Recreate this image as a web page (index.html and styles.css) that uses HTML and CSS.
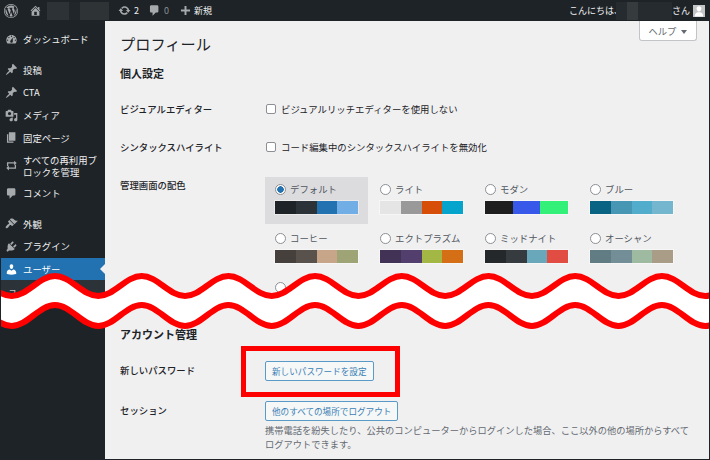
FILE: index.html
```html
<!DOCTYPE html>
<html lang="ja">
<head>
    <meta charset="UTF-8">
    <meta name="viewport" content="width=device-width, initial-scale=1.0">
    <title>プロフィール</title>
    <link rel="stylesheet" href="styles.css">
</head>
<body>
    <div class="frame">
        <header class="adminbar">
            <svg class="bar-logo" viewBox="0 0 20 20"><path d="M20 10c0-5.52-4.48-10-10-10S0 4.48 0 10s4.48 10 10 10 10-4.48 10-10zM10 1.01c4.96 0 8.99 4.03 8.99 8.99s-4.03 8.99-8.99 8.99S1.01 14.96 1.01 10 5.04 1.01 10 1.01zM8.01 14.82L4.96 6.61c.49-.03 1.05-.08 1.05-.08.43-.05.38-1.01-.06-.99 0 0-1.29.1-2.13.1-.15 0-.33 0-.52-.01 1.44-2.17 3.9-3.6 6.7-3.6 2.09 0 3.99.79 5.41 2.09-.6-.08-1.45.35-1.45 1.42 0 .66.38 1.22.79 1.88.31.54.5 1.22.5 2.21 0 1.34-1.27 4.48-1.27 4.48l-2.71-7.5c.48-.03.75-.16.75-.16.43-.05.38-1.1-.05-1.08 0 0-1.3.11-2.14.11-.78 0-2.11-.11-2.11-.11-.43-.02-.48 1.06-.05 1.08l.84.08 1.12 3.04zm6.02 2.15L16.64 10s.67-1.69.39-3.81c.63 1.14.94 2.42.94 3.81 0 2.96-1.56 5.58-3.94 6.97zM2.68 6.77L6.5 17.25c-2.67-1.3-4.47-4.08-4.47-7.25 0-1.16.2-2.23.65-3.23zm7.45 4.53l2.29 6.25c-.75.27-1.57.42-2.42.42-.72 0-1.41-.11-2.06-.3z"/></svg>
            <svg class="bar-icon home" viewBox="0 0 20 20"><path d="M16 8.5l1.53 1.53-1.06 1.06L10 4.62l-6.47 6.47-1.06-1.06L10 2.5l4 4v-2h2v4zm-6-2.46l6 5.99V18H4v-5.97zM12 17v-5H8v5h4z"/></svg>
            <div class="mosaic site-name"></div>
            <svg class="bar-icon updates" viewBox="0 0 20 20"><path d="M10.2 3.28c3.53 0 6.43 2.61 6.92 6h2.08l-3.5 4-3.5-4h2.32c-.45-1.97-2.21-3.45-4.32-3.45-1.45 0-2.73.71-3.54 1.78L4.95 5.66C6.23 4.2 8.11 3.28 10.2 3.28zm-.4 13.44c-3.52 0-6.43-2.61-6.92-6H.8l3.5-4c1.17 1.33 2.33 2.67 3.5 4H5.48c.45 1.97 2.21 3.45 4.32 3.45 1.45 0 2.73-.71 3.54-1.78l1.71 1.95c-1.28 1.46-3.15 2.38-5.25 2.38z"/></svg>
            <span class="bar-text bar-count">2</span>
            <svg class="bar-icon comments" viewBox="0 0 20 20"><path d="M5 2h9c1.1 0 2 .9 2 2v7c0 1.1-.9 2-2 2h-2l-5 5v-5H5c-1.1 0-2-.9-2-2V4c0-1.1.9-2 2-2z"/></svg>
            <span class="bar-text bar-zero">0</span>
            <svg class="bar-icon plus" viewBox="0 0 20 20"><path d="M8.5 3h3v5.500H17v3h-5.500V17h-3v-5.500H3v-3h5.500z"/></svg>
            <span class="bar-text">新規</span>
            <div class="bar-right">
                <span class="bar-text">こんにちは、</span>
                <div class="mosaic user-name"></div>
                <span class="bar-text">さん</span>
                <div class="avatar">
                    <svg viewBox="0 0 20 20"><path d="M10 11c-2.500 0-4-2.500-4-5s1.500-4 4-4 4 1.500 4 4-1.500 5-4 5zm-7 8c0-4 2-6.500 5-7h4c3 .5 5 3 5 7z"/></svg>
                </div>
            </div>
        </header>

        <div class="layout">
            <nav class="sidebar">
                <ul class="menu menu-first">
                    <li><svg viewBox="0 0 20 20"><path d="M3.760 16h12.480c1.100-1.370 1.760-3.110 1.760-5 0-4.420-3.580-8-8-8s-8 3.580-8 8c0 1.890.66 3.630 1.760 5zM10 4c.55 0 1 .45 1 1s-.45 1-1 1-1-.45-1-1 .45-1 1-1zM6 6c.55 0 1 .45 1 1s-.45 1-1 1-1-.45-1-1 .45-1 1-1zm8 0c.55 0 1 .45 1 1s-.45 1-1 1-1-.45-1-1 .45-1 1-1zm-5.370 5.550L12 7v6c0 1.100-.9 2-2 2s-2-.9-2-2c0-.57.24-1.080.63-1.450zM4 10c.55 0 1 .45 1 1s-.45 1-1 1-1-.45-1-1 .45-1 1-1zm12 0c.55 0 1 .45 1 1s-.45 1-1 1-1-.45-1-1 .45-1 1-1z"/></svg><span>ダッシュボード</span></li>
                </ul>
                <ul class="menu">
                    <li><svg viewBox="0 0 20 20"><path d="M10.440 3.020l1.820-1.820 6.360 6.350-1.830 1.820c-1.050-.68-2.480-.57-3.410.36l-.75.75c-.92.93-1.040 2.350-.35 3.410l-1.830 1.820-2.410-2.410-2.800 2.790c-.42.42-3.380 2.710-3.800 2.290s1.860-3.390 2.280-3.810l2.790-2.790L4.100 9.360l1.830-1.820c1.050.69 2.480.57 3.400-.36l.75-.75c.93-.92 1.050-2.350.36-3.410z"/></svg><span>投稿</span></li>
                    <li><svg viewBox="0 0 20 20"><path d="M10.440 3.020l1.820-1.820 6.360 6.350-1.830 1.820c-1.050-.68-2.480-.57-3.410.36l-.75.75c-.92.93-1.040 2.350-.35 3.410l-1.830 1.820-2.410-2.410-2.800 2.790c-.42.42-3.380 2.710-3.800 2.290s1.860-3.390 2.280-3.810l2.790-2.790L4.100 9.360l1.830-1.820c1.050.69 2.480.57 3.400-.36l.75-.75c.93-.92 1.050-2.350.36-3.410z"/></svg><span>CTA</span></li>
                    <li><svg viewBox="0 0 20 20"><path d="M13 11V4c0-.55-.45-1-1-1h-1.670L9 1H5L3.670 3H2c-.55 0-1 .45-1 1v7c0 .55.45 1 1 1h10c.55 0 1-.45 1-1zM7 4.500c1.380 0 2.500 1.120 2.500 2.500S8.380 9.500 7 9.500 4.500 8.380 4.500 7 5.620 4.500 7 4.500zM14 6h5v10.500c0 1.380-1.120 2.500-2.500 2.500S14 17.880 14 16.500s1.120-2.500 2.500-2.500c.17 0 .34.02.5.05V9h-3V6zm-4 8.050V13h2v3.500c0 1.380-1.120 2.500-2.500 2.500S7 17.880 7 16.500 8.120 14 9.500 14c.17 0 .34.02.5.05z"/></svg><span>メディア</span></li>
                    <li><svg viewBox="0 0 20 20"><path d="M6 15V2h10v13H6zm-1 1h8v2H3V5h2v11z"/></svg><span>固定ページ</span></li>
                    <li class="menu-tall"><svg viewBox="0 0 20 20"><path d="M3 5h11V2.500l4 3.500-4 3.500V7H5v4H3zM17 15H6v2.500L2 14l4-3.500V13h9V9h2z"/></svg><span>すべての再利用ブロックを管理</span></li>
                    <li><svg viewBox="0 0 20 20"><path d="M5 2h9c1.100 0 2 .9 2 2v7c0 1.100-.9 2-2 2h-2l-5 5v-5H5c-1.100 0-2-.9-2-2V4c0-1.100.9-2 2-2z"/></svg><span>コメント</span></li>
                </ul>
                <ul class="menu">
                    <li><svg viewBox="0 0 20 20"><path d="M14.480 11.060L7.410 3.990l1.500-1.500c.5-.56 2.300-.47 3.510.32 1.210.8 1.430 1.280 2.910 2.100 1.180.64 2.450 1.260 4.450.85zm-.71.71L6.700 4.700 4.930 6.470c-.39.39-.39 1.020 0 1.410l1.060 1.060c.39.39.39 1.030 0 1.420-.6.6-1.430 1.110-2.210 1.690-.35.26-.7.53-1.010.84-1.340 1.340-2.370 2.950-1.340 3.980.98.98 2.590-.14 3.690-1.210.32-.31.58-.66.84-1.010.58-.78 1.090-1.610 1.690-2.210.39-.39 1.020-.39 1.410 0l1.060 1.060c.39.39 1.020.39 1.410 0z"/></svg><span>外観</span></li>
                    <li><svg viewBox="0 0 20 20"><path d="M13.110 4.360L9.870 7.600 8 5.730l3.240-3.240c.35-.34 1.050-.2 1.560.32.52.51.66 1.210.31 1.550zm-8 1.770l.91-1.120 9.010 9.010-1.190.84c-.71.71-2.630 1.160-3.820 1.160H6.140L4.900 17.260c-.59.59-1.540.59-2.120 0-.59-.58-.59-1.530 0-2.120l1.240-1.240v-3.880c0-1.130.4-3.190 1.090-3.890zm7.260 3.970l3.240-3.240c.34-.35 1.040-.21 1.550.31.52.51.66 1.210.31 1.550l-3.240 3.250z"/></svg><span>プラグイン</span></li>
                    <li class="menu-current"><svg viewBox="0 0 20 20"><path d="M10 9.250c-2.270 0-2.730-3.440-2.730-3.440C7 4.020 7.820 2 9.970 2c2.160 0 2.980 2.020 2.710 3.810 0 0-.41 3.440-2.680 3.440zm0 2.570L12.720 10c2.390 0 4.520 2.330 4.520 4.530v2.490s-3.650 1.130-7.240 1.130c-3.650 0-7.240-1.130-7.240-1.130v-2.490c0-2.250 1.940-4.480 4.470-4.480z"/></svg><span>ユーザー</span></li>
                </ul>
                <div class="submenu">ユーザー一覧</div>
            </nav>

            <main class="content">
                <div class="help-tab">ヘルプ <i class="help-arrow"></i></div>

                <section class="upper">
                    <h1>プロフィール</h1>
                    <h2>個人設定</h2>
                    <div class="row row-check">
                        <div class="row-label">ビジュアルエディター</div>
                        <label class="check"><i class="checkbox"></i>ビジュアルリッチエディターを使用しない</label>
                    </div>
                    <div class="row row-check">
                        <div class="row-label">シンタックスハイライト</div>
                        <label class="check"><i class="checkbox"></i>コード編集中のシンタックスハイライトを無効化</label>
                    </div>
                    <div class="row row-schemes">
                        <div class="row-label row-label-schemes">管理画面の配色</div>
                        <div class="schemes">
                            <div class="scheme scheme-selected">
                                <div class="scheme-name"><i class="radio radio-on"></i>デフォルト</div>
                                <div class="swatch"><b class="c-1d"></b><b class="c-2c"></b><b class="c-22"></b><b class="c-72"></b></div>
                            </div>
                            <div class="scheme">
                                <div class="scheme-name"><i class="radio"></i>ライト</div>
                                <div class="swatch"><b class="c-e5"></b><b class="c-99"></b><b class="c-d6"></b><b class="c-04"></b></div>
                            </div>
                            <div class="scheme">
                                <div class="scheme-name"><i class="radio"></i>モダン</div>
                                <div class="swatch"><b class="c-1e"></b><b class="c-36"></b><b class="c-33"></b></div>
                            </div>
                            <div class="scheme">
                                <div class="scheme-name"><i class="radio"></i>ブルー</div>
                                <div class="swatch"><b class="c-09"></b><b class="c-45"></b><b class="c-4f"></b><b class="c-74"></b></div>
                            </div>
                            <div class="scheme">
                                <div class="scheme-name"><i class="radio"></i>コーヒー</div>
                                <div class="swatch"><b class="c-46"></b><b class="c-59"></b><b class="c-c7"></b><b class="c-9e"></b></div>
                            </div>
                            <div class="scheme">
                                <div class="scheme-name"><i class="radio"></i>エクトプラズム</div>
                                <div class="swatch"><b class="c-41"></b><b class="c-52"></b><b class="c-a3"></b><b class="c-d4"></b></div>
                            </div>
                            <div class="scheme">
                                <div class="scheme-name"><i class="radio"></i>ミッドナイト</div>
                                <div class="swatch"><b class="c-25"></b><b class="c-36b"></b><b class="c-69"></b><b class="c-e1"></b></div>
                            </div>
                            <div class="scheme">
                                <div class="scheme-name"><i class="radio"></i>オーシャン</div>
                                <div class="swatch"><b class="c-62"></b><b class="c-73"></b><b class="c-9e2"></b><b class="c-aa"></b></div>
                            </div>
                            <div class="scheme">
                                <div class="scheme-name"><i class="radio"></i>サンライズ</div>
                            </div>
                        </div>
                    </div>
                </section>

                <section class="lower">
                    <h2>アカウント管理</h2>
                    <div class="row row-password">
                        <div class="row-label">新しいパスワード</div>
                        <div class="highlight"><button class="btn">新しいパスワードを設定</button></div>
                    </div>
                    <div class="row row-session">
                        <div class="row-label">セッション</div>
                        <div>
                            <button class="btn">他のすべての場所でログアウト</button>
                            <p class="description">携帯電話を紛失したり、公共のコンピューターからログインした場合、ここ以外の他の場所からすべてログアウトできます。</p>
                        </div>
                    </div>
                </section>
            </main>
        </div>

        <!-- 省略を示す波線 -->
        <svg class="wave" viewBox="0 0 710 70">
            <path class="wave-fill" d="M-31.7 6c16 0 27.350 20 43.350 20s27.350-20 43.350-20s27.350 20 43.350 20s27.350-20 43.350-20s27.350 20 43.350 20s27.350-20 43.350-20s27.350 20 43.350 20s27.350-20 43.350-20s27.350 20 43.350 20s27.350-20 43.350-20s27.350 20 43.350 20s27.350-20 43.350-20s27.350 20 43.350 20s27.350-20 43.350-20s27.350 20 43.350 20s27.350-20 43.350-20s27.350 20 43.350 20s27.350-20 43.350-20V35c-16 0-27.350 21-43.350 21s-27.350-21-43.350-21s-27.350 21-43.350 21s-27.350-21-43.350-21s-27.350 21-43.350 21s-27.350-21-43.350-21s-27.350 21-43.350 21s-27.350-21-43.350-21s-27.350 21-43.350 21s-27.350-21-43.350-21s-27.350 21-43.350 21s-27.350-21-43.350-21s-27.350 21-43.350 21s-27.350-21-43.350-21s-27.350 21-43.350 21s-27.350-21-43.350-21s-27.350 21-43.350 21s-27.350-21-43.350-21z"/>
            <path class="wave-line" d="M-31.7 6c16 0 27.350 20 43.350 20s27.350-20 43.350-20s27.350 20 43.350 20s27.350-20 43.350-20s27.350 20 43.350 20s27.350-20 43.350-20s27.350 20 43.350 20s27.350-20 43.350-20s27.350 20 43.350 20s27.350-20 43.350-20s27.350 20 43.350 20s27.350-20 43.350-20s27.350 20 43.350 20s27.350-20 43.350-20s27.350 20 43.350 20s27.350-20 43.350-20s27.350 20 43.350 20s27.350-20 43.350-20"/>
            <path class="wave-line" d="M-31.7 35c16 0 27.350 21 43.350 21s27.350-21 43.350-21s27.350 21 43.350 21s27.350-21 43.350-21s27.350 21 43.350 21s27.350-21 43.350-21s27.350 21 43.350 21s27.350-21 43.350-21s27.350 21 43.350 21s27.350-21 43.350-21s27.350 21 43.350 21s27.350-21 43.350-21s27.350 21 43.350 21s27.350-21 43.350-21s27.350 21 43.350 21s27.350-21 43.350-21s27.350 21 43.350 21s27.350-21 43.350-21"/>
        </svg>
    </div>
</body>
</html>
```

FILE: styles.css
```css
* {
    box-sizing: border-box;
}

body {
    margin: 0;
    font-family: "Noto Sans CJK JP", "Noto Sans", sans-serif;
    font-size: 9.4px;
    color: #1d2327;
    background-color: #f0f0f1;
}

.frame {
    position: relative;
    width: 710px;
    height: 460px;
    overflow: hidden;
}

/* 画像の外枠 */
.frame::after {
    content: "";
    position: absolute;
    top: 0;
    right: 0;
    bottom: 0;
    left: 0;
    border: 1px solid #1d2327;
}

/* 管理バー */
.adminbar {
    display: flex;
    align-items: center;
    height: 21px;
    padding-left: 4px;
    background-color: #1d2327;
    color: #f0f0f1;
    font-size: 9px;
}

.adminbar svg {
    fill: #a7aaad;
}

.bar-logo {
    width: 14px;
    height: 14px;
    margin-right: 11px;
}

.bar-icon {
    width: 13px;
    height: 13px;
}

.site-name {
    width: 62px;
    margin: 0 9px 0 5px;
    background-image: linear-gradient(90deg, #2c3236 0 35%, #20262a 35% 53%, #2e3336 53% 100%);
}

.bar-text {
    line-height: 21px;
    white-space: nowrap;
}

.bar-count {
    margin: 0 9px 0 3px;
}

.bar-zero {
    margin: 0 10px 0 3px;
    color: #8c8f94;
}

.plus {
    margin-right: 2px;
}

.bar-right {
    display: flex;
    align-items: center;
    margin-left: auto;
    padding-right: 5px;
}

.user-name {
    width: 56px;
    margin-left: -7px;
    background-image: linear-gradient(90deg, #262b2f 0 20%, #363b3e 20% 40%, #262b2f 40% 100%);
}

.mosaic {
    height: 18px;
}

.avatar {
    width: 12px;
    height: 12px;
    margin-left: 3px;
    background-color: #c3c4c7;
}

.adminbar .avatar svg {
    display: block;
    fill: #fff;
}

.layout {
    display: flex;
    height: 439px;
}

/* サイドメニュー */
.sidebar {
    flex: none;
    width: 105px;
    background-color: #1d2327;
    color: #f0f0f1;
}

.menu {
    margin: 0 0 7.600px;
    padding: 0;
    list-style: none;
}

.menu-first {
    margin-top: 7px;
}

.menu li {
    display: flex;
    align-items: center;
    min-height: 22.700px;
    padding: 0 6px 0 5px;
    line-height: 12px;
}

.menu svg {
    flex: none;
    width: 13px;
    height: 13px;
    margin-right: 5px;
    fill: #a7aaad;
}

.menu .menu-tall {
    min-height: 33px;
}

.menu .menu-current {
    position: relative;
    background-color: #2271b1;
    color: #fff;
}

.menu .menu-current svg {
    fill: #fff;
}

.menu-current::after {
    content: "";
    position: absolute;
    right: 0;
    top: 50%;
    margin-top: -5px;
    border: 5px solid transparent;
    border-left-width: 0;
    border-right-color: #f0f0f1;
}

.submenu {
    height: 19px;
    margin-top: -7.600px;
    padding: 5px 0 0 8px;
    background-color: #2c3338;
    color: #c3c4c7;
}

/* メイン */
.content {
    position: relative;
    flex: 1;
    min-width: 0;
    padding-left: 15px;
}

.help-tab {
    position: absolute;
    top: 0;
    right: 13px;
    width: 58px;
    height: 20px;
    border: 1px solid #c3c4c7;
    border-top: 0;
    border-radius: 0 0 3px 3px;
    background-color: #fff;
    color: #646970;
    font-size: 9.300px;
    line-height: 20px;
    text-align: center;
}

.help-arrow {
    display: inline-block;
    margin-left: 3px;
    border: 3px solid transparent;
    border-top: 4px solid #646970;
    border-bottom: 0;
    vertical-align: 1px;
}

.upper {
    height: 279px;
    overflow: hidden;
}

.lower {
    padding-top: 25px;
}

h1 {
    margin: 11px 0 0;
    font-size: 15.200px;
    font-weight: 400;
    line-height: 22px;
}

h2 {
    margin: 0;
    font-size: 11px;
    font-weight: 700;
    line-height: 18px;
}

.upper h2 {
    margin-top: 10px;
}

.row {
    display: grid;
    grid-template-columns: 145px 1fr;
    margin-top: 14px;
}

.row-label {
    font-weight: 500;
}

.row-label-schemes {
    padding-top: 1px;
}

.row-check {
    align-items: center;
    height: 25px;
    line-height: 14px;
}

.row-check + .row-check {
    margin-top: 13px;
}

.row-schemes {
    margin-top: 18px;
}

.check {
    display: flex;
    align-items: center;
}

.checkbox {
    width: 10px;
    height: 10px;
    margin: 0 5px 0 1px;
    border: 1px solid #8c8f94;
    border-radius: 2px;
    background-color: #fff;
}

.schemes {
    display: grid;
    grid-template-columns: repeat(4, 105px);
    grid-auto-rows: 49px;
}

.scheme {
    width: 103px;
    height: 47px;
    padding: 5px 0 0 10px;
    color: #50575e;
}

.scheme-selected {
    background-color: #dcdcde;
}

.scheme-name {
    display: flex;
    align-items: center;
    height: 14px;
    white-space: nowrap;
}

.radio {
    flex: none;
    width: 11px;
    height: 11px;
    margin-right: 4px;
    border: 1px solid #8c8f94;
    border-radius: 50%;
    background-color: #fff;
}

.radio-on {
    background-image: radial-gradient(circle, #2271b1 0 3px, transparent 3.500px);
}

.swatch {
    display: flex;
    width: 83px;
    height: 13px;
    margin-top: 5px;
    box-shadow: 0 0 0 1px rgba(255, 255, 255, 0.4);
}

.swatch b {
    flex: 1;
}

.c-1d { background-color: #1d2327; }
.c-2c { background-color: #2c3338; }
.c-22 { background-color: #2271b1; }
.c-72 { background-color: #72aee6; }
.c-e5 { background-color: #e5e5e5; }
.c-99 { background-color: #999; }
.c-d6 { background-color: #d64e07; }
.c-04 { background-color: #04a4cc; }
.c-1e { background-color: #1e1e1e; }
.c-36 { background-color: #3858e9; }
.c-33 { background-color: #33f078; }
.c-09 { background-color: #096484; }
.c-45 { background-color: #4796b3; }
.c-4f { background-color: #52accc; }
.c-74 { background-color: #74b6ce; }
.c-46 { background-color: #46403c; }
.c-59 { background-color: #59524c; }
.c-c7 { background-color: #c7a589; }
.c-9e { background-color: #9ea476; }
.c-41 { background-color: #413256; }
.c-52 { background-color: #523f6d; }
.c-a3 { background-color: #a3b745; }
.c-d4 { background-color: #d46f15; }
.c-25 { background-color: #25282b; }
.c-36b { background-color: #363b3f; }
.c-69 { background-color: #69a8bb; }
.c-e1 { background-color: #e14d43; }
.c-62 { background-color: #627c83; }
.c-73 { background-color: #738e96; }
.c-9e2 { background-color: #9ebaa0; }
.c-aa { background-color: #aa9d88; }

.row-password {
    margin-top: 18px;
    align-items: center;
}

.row-password .row-label {
    padding-bottom: 2px;
}

.row-session {
    margin-top: 20px;
}

.row-session .row-label {
    padding-top: 2px;
}

.highlight {
    position: relative;
    width: max-content;
}

/* 赤枠 */
.highlight::before {
    content: "";
    position: absolute;
    left: -24px;
    right: -26px;
    top: -15px;
    bottom: -16px;
    border: 5px solid #f00;
}

.btn {
    display: block;
    height: 20px;
    padding: 0 6px;
    border: 1px solid #5a9ac8;
    border-radius: 2px;
    background-color: #f6f7f7;
    color: #3a7fb5;
    font-family: inherit;
    font-size: 8.600px;
    line-height: 18px;
}

.description {
    margin: 2px 0 0;
    width: 430px;
    color: #646970;
    font-size: 9.250px;
    line-height: 14px;
}

/* 波線 */
.wave {
    position: absolute;
    left: 0;
    top: 270px;
    width: 710px;
    height: 70px;
}

.wave-fill {
    fill: #fff;
}

.wave-line {
    fill: none;
    stroke: #f00;
    stroke-width: 6;
}
```
